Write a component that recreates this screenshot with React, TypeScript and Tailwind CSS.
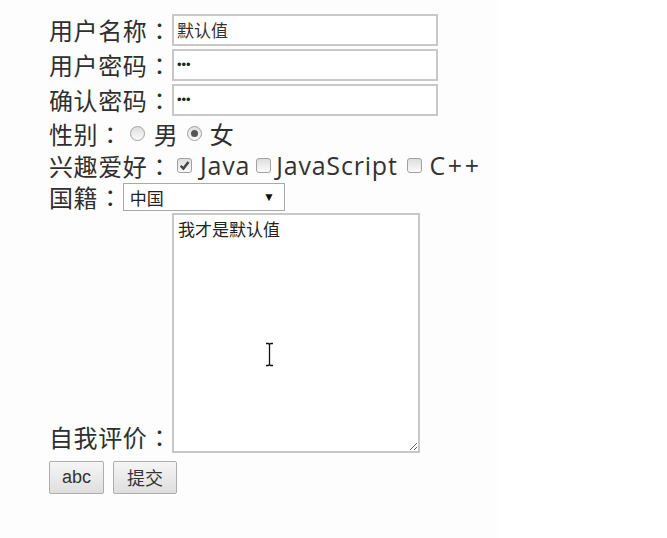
import { useState } from "react";

const cn = "font-['Noto_Sans_CJK_SC',sans-serif]";
const latin = "font-['Open_Sans',sans-serif] text-[25px] leading-none text-[#333] tracking-[0.8px]";

const Label = ({ text, className = "" }: { text: string; className?: string }) => (
  <span className={`flex items-center whitespace-nowrap text-[#2f2f2f] text-[24px] leading-none ${className}`}>
    <span className={`${cn} tracking-[0.6px]`}>{text}</span>
    <span className="w-[24.6px] font-['Noto_Sans_CJK_JP',sans-serif]">：</span>
  </span>
);

const Radio = ({ checked }: { checked?: boolean }) => (
  <span className="w-[15px] h-[15px] rounded-full border border-[#a0a0a0] bg-gradient-to-b from-[#dedede] to-[#fbfbfb] flex items-center justify-center shrink-0">
    {checked && <span className="w-[7px] h-[7px] rounded-full bg-[#555]" />}
  </span>
);

const Checkbox = ({ checked }: { checked?: boolean }) => (
  <span className="w-[15px] h-[15px] rounded-[3px] border border-[#a0a0a0] bg-gradient-to-b from-[#dedede] to-[#fbfbfb] flex items-center justify-center shrink-0">
    {checked && (
      <svg width="11" height="11" viewBox="0 0 10 10">
        <path d="M1.5 5.2 L4 7.8 L8.6 1.8" fill="none" stroke="#444" strokeWidth="2.2" />
      </svg>
    )}
  </span>
);

const App = () => {
  const [name, setName] = useState("默认值");
  return (
    <div className="min-h-[538px] w-full bg-white">
      <div className="w-[497px] min-h-[538px] bg-[#fdfdfd] pl-[49px] pt-[12px]">
        <form className="flex flex-col" onSubmit={(e) => e.preventDefault()}>
          <div className="flex items-center h-[35px]">
            <Label text="用户名称" />
            <input
              value={name}
              onChange={(e) => setName(e.target.value)}
              className={`${cn} w-[266px] h-[32px] border-2 border-[#c8c8c8] bg-white px-[3px] text-[17px] text-[#333] outline-none`}
            />
          </div>
          <div className="flex items-center h-[35px]">
            <Label text="用户密码" />
            <input
              type="password"
              defaultValue="123"
              className="w-[266px] h-[32px] border-2 border-[#c8c8c8] bg-white px-[3px] text-[13px] text-[#222] outline-none font-['Liberation_Sans',sans-serif]"
            />
          </div>
          <div className="flex items-center h-[35px]">
            <Label text="确认密码" />
            <input
              type="password"
              defaultValue="123"
              className="w-[266px] h-[32px] border-2 border-[#c8c8c8] bg-white px-[3px] text-[13px] text-[#222] outline-none font-['Liberation_Sans',sans-serif]"
            />
          </div>
          <div className="flex items-center h-[33px]">
            <Label text="性别" />
            <span className="ml-[7px]"><Radio /></span>
            <span className={`${cn} ml-[9px] text-[24px] leading-none text-[#2f2f2f]`}>男</span>
            <span className="ml-[9px]"><Radio checked /></span>
            <span className={`${cn} ml-[8px] text-[24px] leading-none text-[#2f2f2f]`}>女</span>
          </div>
          <div className="flex items-center h-[31px]">
            <Label text="兴趣爱好" />
            <span className="ml-[5px]"><Checkbox checked /></span>
            <span className={`ml-[8px] ${latin}`}>Java</span>
            <span className="ml-[6px]"><Checkbox /></span>
            <span className={`ml-[5px] ${latin}`}>JavaScript</span>
            <span className="ml-[9px]"><Checkbox /></span>
            <span className={`ml-[8px] ${latin} tracking-[2.5px]`}>C++</span>
          </div>
          <div className="flex items-center h-[32px]">
            <Label text="国籍" />
            <div className="w-[162px] h-[28px] border border-[#a9a9a9] bg-white flex items-center justify-between pl-[6px] pr-[9px]">
              <span className={`${cn} text-[17px] leading-none text-[#222]`}>中国</span>
              <span className="text-[12px] leading-none text-[#111]">▼</span>
            </div>
          </div>
          <div className="flex items-end">
            <Label text="自我评价" className="pb-[4px]" />
            <div className="relative">
              <textarea
                defaultValue="我才是默认值"
                className={`${cn} block w-[248px] h-[240px] border-2 border-[#c8c8c8] bg-white px-[4px] py-[3px] text-[17px] leading-[22px] text-[#222] outline-none`}
              />
              <svg className="absolute left-[93px] top-[129px]" width="9" height="25" viewBox="0 0 9 25">
                <path d="M1 1.5 H3.5 L4.5 2.5 L5.5 1.5 H8 M4.5 2.5 V22.5 M1 23.5 H3.5 L4.5 22.5 L5.5 23.5 H8" fill="none" stroke="#fff" strokeWidth="3" />
                <path d="M1 1.5 H3.5 L4.5 2.5 L5.5 1.5 H8 M4.5 2.5 V22.5 M1 23.5 H3.5 L4.5 22.5 L5.5 23.5 H8" fill="none" stroke="#111" strokeWidth="1.3" />
              </svg>
            </div>
          </div>
          <div className="flex gap-[9px] mt-[8px]">
            <button type="button" className="w-[55px] h-[33px] border border-[#adadad] rounded-[2px] bg-gradient-to-b from-[#f6f6f6] to-[#dedede] font-['Liberation_Sans',sans-serif] text-[18px] text-[#333]">
              abc
            </button>
            <button type="submit" className={`${cn} w-[64px] h-[33px] border border-[#adadad] rounded-[2px] bg-gradient-to-b from-[#f6f6f6] to-[#dedede] text-[18px] text-[#333]`}>
              提交
            </button>
          </div>
        </form>
      </div>
    </div>
  );
};

export default App;
